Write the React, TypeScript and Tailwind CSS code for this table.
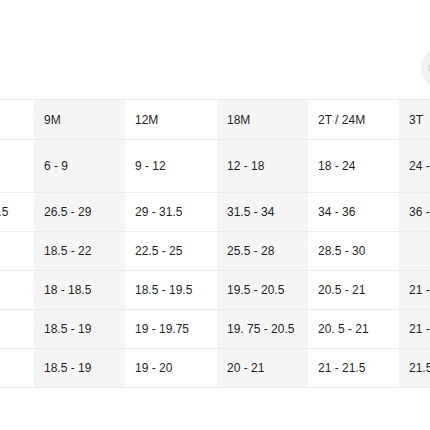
const columns = ["6M", "9M", "12M", "18M", "2T / 24M", "3T"];

const rows: { tall?: boolean; cells: string[] }[] = [
  { tall: true, cells: ["3 - 6", "6 - 9", "9 - 12", "12 - 18", "18 - 24", "24 - 30"] },
  { cells: ["24.5 - 26.5", "26.5 - 29", "29 - 31.5", "31.5 - 34", "34 - 36", "36 - 38"] },
  { cells: ["16 - 18", "18.5 - 22", "22.5 - 25", "25.5 - 28", "28.5 - 30", ""] },
  { cells: ["17 - 18", "18 - 18.5", "18.5 - 19.5", "19.5 - 20.5", "20.5 - 21", "21 - 22"] },
  { cells: ["18 - 18", "18.5 - 19", "19 - 19.75", "19. 75 - 20.5", "20. 5 - 21", "21 - 22"] },
  { cells: ["18 - 18", "18.5 - 19", "19 - 20", "20 - 21", "21 - 21.5", "21.5 - 22"] },
];

// alternating column shading: first column white, then gray/white
const colBg = ["bg-white", "bg-[#f5f5f5]", "bg-white", "bg-[#f5f5f5]", "bg-white", "bg-[#f5f5f5]"];

export default function App() {
  return (
    <div
      className="relative h-[430px] w-[430px] overflow-hidden bg-white text-[#1f1f1f]"
      style={{ fontFamily: '"Liberation Sans", Arial, sans-serif' }}
    >
      {/* scroll button peeking in from the right */}
      <div className="absolute left-[421px] top-[46px] flex h-[44px] w-[44px] items-center rounded-full bg-[#f2f2f2] pl-[6px]">
        <svg width="16" height="16" viewBox="0 0 16 16" fill="none">
          <circle cx="8" cy="8" r="6" stroke="#d6d6d6" strokeWidth="1.5" />
        </svg>
      </div>

      <div className="pt-[99px]">
        <div className="ml-[-57px] border-t border-[#ebebeb]">
          {/* header */}
          <div className="grid grid-cols-[91px_91px_92px_91px_91px_91px] border-b border-[#ebebeb]">
            {columns.map((c, i) => (
              <div key={c} className={`${colBg[i]} flex h-[39px] items-center pl-[10px] text-[12px]`}>
                {i === 0 ? "" : c}
              </div>
            ))}
          </div>

          {rows.map((r, ri) => (
            <div
              key={ri}
              className="grid grid-cols-[91px_91px_92px_91px_91px_91px] border-b border-[#ebebeb]"
            >
              {r.cells.map((v, i) => (
                <div
                  key={i}
                  className={`${colBg[i]} flex items-center whitespace-nowrap text-[12px] ${
                    i === 0 ? "pl-[8px]" : "pl-[10px]"
                  } ${r.tall ? "h-[52px]" : "h-[38px]"}`}
                >
                  {v}
                </div>
              ))}
            </div>
          ))}
        </div>
      </div>
    </div>
  );
}
